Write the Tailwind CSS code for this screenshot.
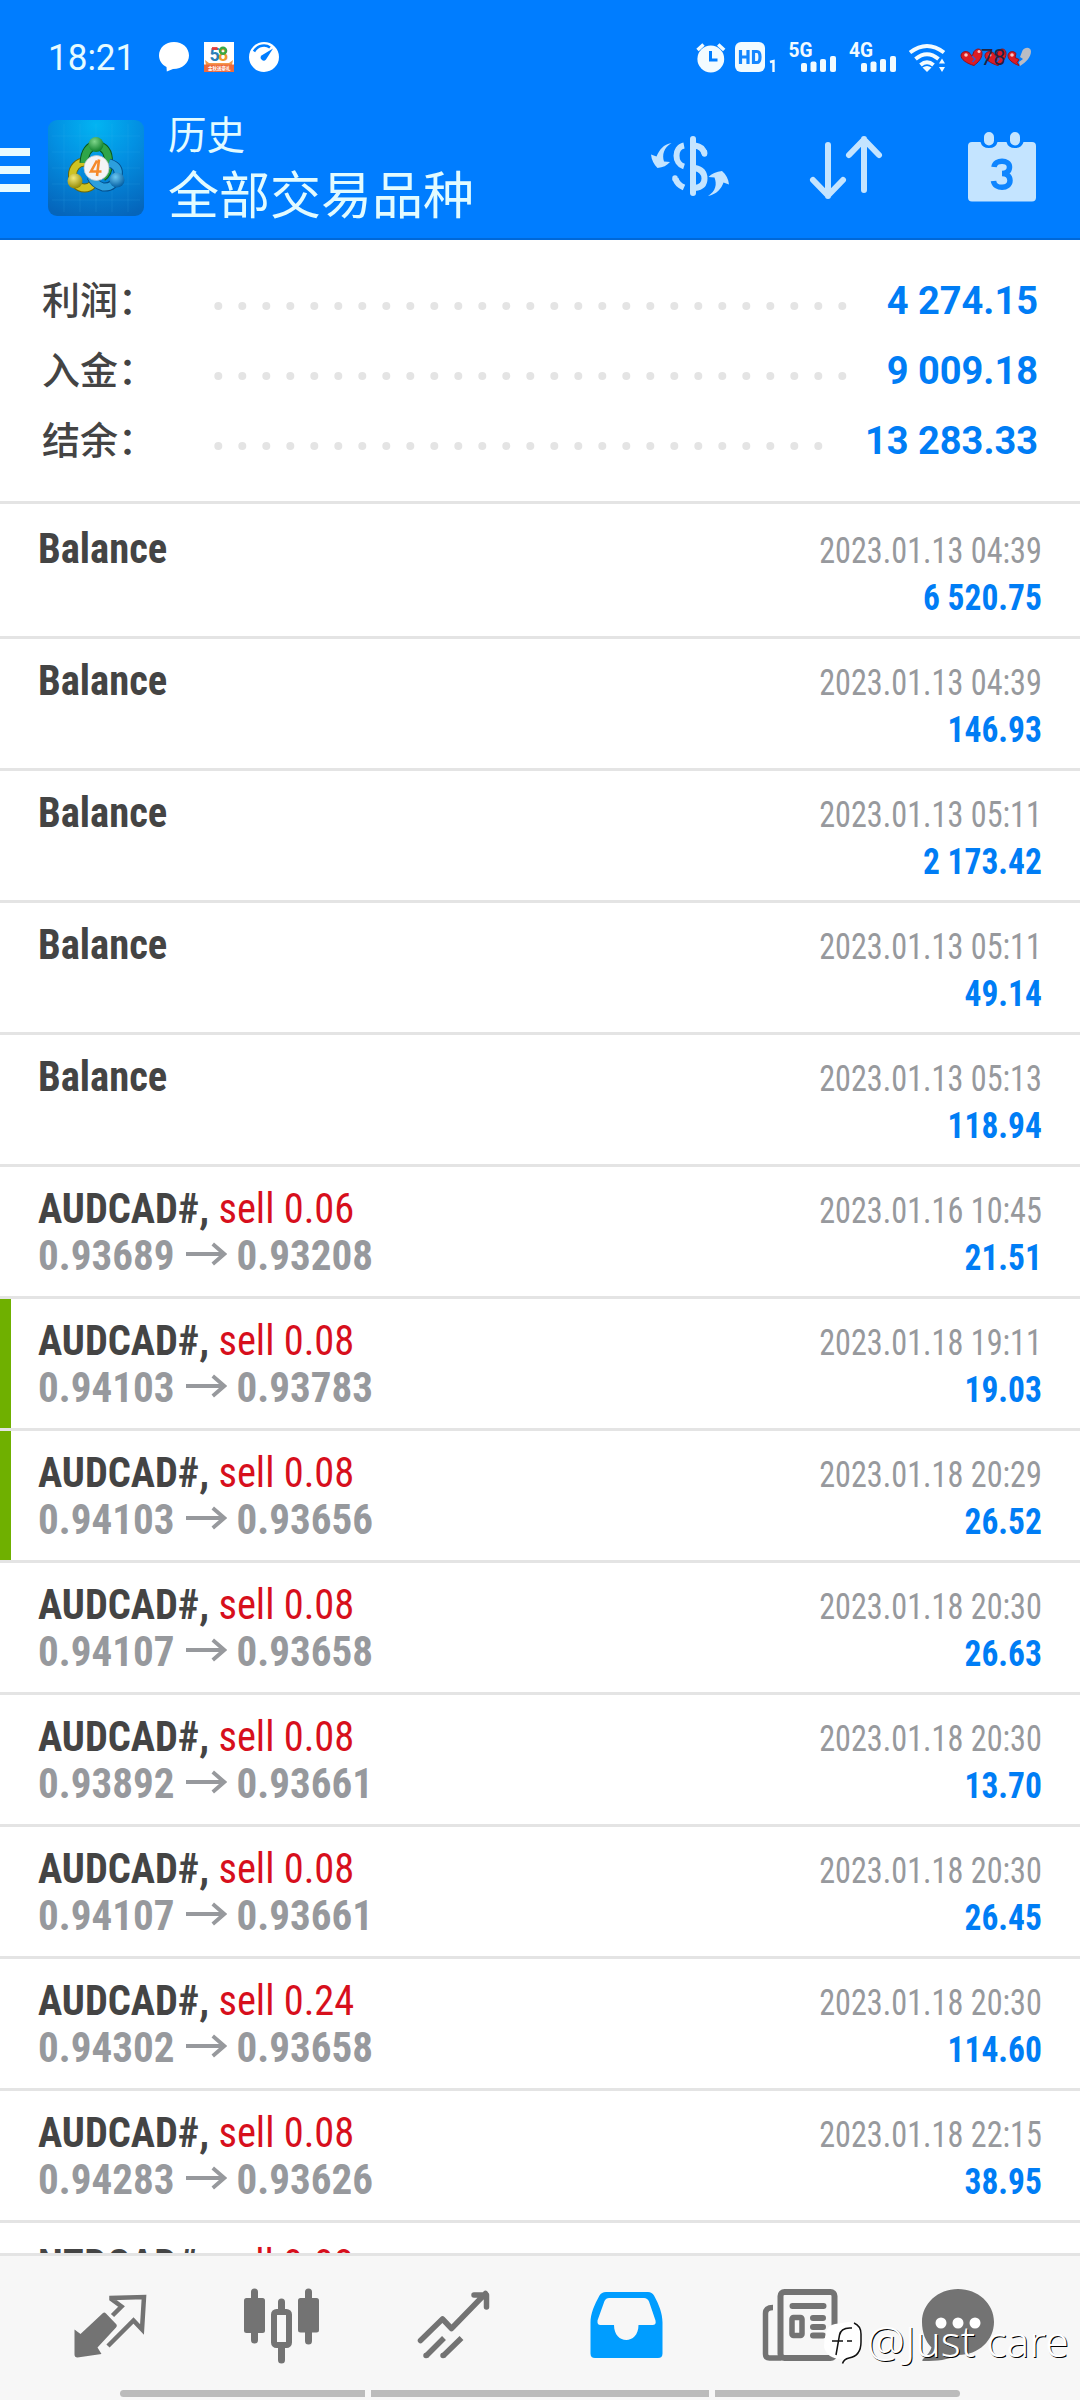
<!DOCTYPE html>
<html lang="zh-CN">
<head>
<meta charset="utf-8">
<title>历史</title>
<script src="https://cdn.jsdelivr.net/npm/@tailwindcss/browser@4"></script>
</head>
<body class="w-[1080px] h-[2400px] overflow-hidden bg-white font-['Roboto','Noto_Sans_CJK_SC',sans-serif] flex flex-col relative">

<header class="h-[240px] shrink-0 bg-[#007dff] border-b-2 border-[#0068d8] flex flex-col">
  <!-- status bar -->
  <div class="h-[116px] flex items-start justify-between pl-[48px]">
    <div class="flex items-start pt-[43px]">
      <span class="w-[111px] text-[36.5px] leading-[30px] text-[#e6fbff] origin-left scale-x-[0.96]">18:21</span>
      <svg class="-mt-px" width="30" height="30" viewBox="0 0 30 30"><path d="M15 0C6.500 0 0 5.800 0 13.500c0 5 3 9.300 7.500 11.500L7.800 29.500 14 27C23.500 27 30 21 30 13.500 30 5.800 23.500 0 15 0z" fill="#fff"/></svg>
      <svg class="-mt-px ml-[15px]" width="30" height="30" viewBox="0 0 30 30"><rect width="30" height="30" fill="#fff"/><path d="M1 18l4 3h20l4-3-1 5H2z" fill="#f59a4a"/><rect y="22.500" width="30" height="7.500" fill="#ee6a3c"/><g font-family="Roboto" font-weight="700" font-size="18"><text x="5.500" y="18.500" fill="#2a7fb8">5</text><text x="14" y="18.500" fill="#ef9a2c">8</text></g><path d="M8 6.500h5.500" stroke="#e33b3b" stroke-width="2.800"/><circle cx="19" cy="8.700" r="3" fill="none" stroke="#3aa845" stroke-width="2.400"/><text x="4" y="28" font-size="4.500" font-weight="700" fill="#fff" font-family="Noto Sans CJK SC">金秋送豪礼</text></svg>
      <svg class="-mt-px ml-[15px]" width="30" height="30" viewBox="0 0 30 30"><circle cx="15" cy="15" r="15" fill="#fff"/><path d="M5 9.500C9 2.500 17 2.500 21 5.500" fill="none" stroke="#007dff" stroke-width="2.600"/><path d="M24 6.500L12.500 13.500a3 3 0 1 0 4.500 4z" fill="#007dff"/></svg>
    </div>
    <svg width="400" height="100" viewBox="680 0 400 100" fill="#f2fbff">
      <circle cx="710.800" cy="59" r="13.400"/><path d="M697.500 50l6-5.500M724.200 50l-6-5.500" stroke="#f2fbff" stroke-width="3.500"/><path d="M710.500 51v9h7" fill="none" stroke="#007dff" stroke-width="3"/>
      <rect x="735" y="42" width="30" height="30" rx="6"/><path d="M740.500 50v14M748 50v14M740.500 57h7.500M753.500 50v14M752 51.500h5q3 0 3 5.500t-3 5.500h-5" fill="none" stroke="#1486ff" stroke-width="3.200"/>
      <path d="M770 62l3.500-1v11" fill="none" stroke="#f2fbff" stroke-width="2.400"/>
      <g font-family="Roboto" font-weight="700" font-size="20"><text x="788.500" y="57" textLength="24" lengthAdjust="spacingAndGlyphs">5G</text><text x="849" y="57" textLength="24" lengthAdjust="spacingAndGlyphs">4G</text></g>
      <g><rect x="801" y="63" width="6" height="9" rx="2"/><rect x="810.500" y="61.500" width="6" height="10.500" rx="2"/><rect x="820" y="59" width="6" height="13" rx="2"/><rect x="830" y="56" width="6" height="16" rx="2"/></g>
      <g><rect x="861" y="63" width="6" height="9" rx="2"/><rect x="870.500" y="61.500" width="6" height="10.500" rx="2"/><rect x="880" y="59" width="6" height="13" rx="2"/><rect x="890" y="56" width="6" height="16" rx="2"/></g>
      <g fill="none" stroke="#f2fbff" stroke-width="4"><path d="M910 52.500Q927 39.500 944 52.500"/><path d="M915.500 59Q927 49.500 938.500 59"/><path d="M920.500 65Q927 59.500 933.500 65"/></g><path d="M922.500 67.500q4.500-3 9 0L927 72z"/><path d="M942 58.500l3 5h-6zM942 72l3-5h-6z"/>
      <!-- heart-shaped battery gauge -->
      <g fill="#dc1c24" stroke="#8e1220" stroke-width="1"><path id="h" d="M974 65.500c-7-2-13.500-6-13-10.500 1-4 6.500-4.500 9-1.500l2 3 2-5c3-4 8-3 8 2 0 5-4 9-8 12z"/><use href="#h" x="24"/><path d="M1019 65.500c-6-2-11.500-6-11-10.500 1-4 5.500-4.500 8-1.500l-1 4 4 2-2 3z"/></g>
      <path d="M1020 66c6-3.500 11-9 11-14.500 0-4.500-6-5-8.500-1l-2.500 6.500 3 2-4 3z" fill="#b9bcc4"/>
      <path d="M972 56l3 3-2.500 3M996 56l3 3-2.500 3" fill="none" stroke="#3b56c8" stroke-width="1.500"/>
      <g fill="#fff" opacity=".75"><circle cx="966" cy="55" r="1.800"/><circle cx="979" cy="51.500" r="1.500"/><circle cx="990" cy="55" r="1.500"/><circle cx="1012" cy="55" r="1.800"/></g>
      <text x="981" y="65" font-family="Roboto" font-size="22" fill="#1f2444">78</text>
    </svg>
  </div>
  <!-- toolbar -->
  <div class="flex-1 flex items-start">
    <div class="mt-[32px] w-[30px] flex flex-col gap-[10px]"><i class="h-2 bg-[#e8fbff]"></i><i class="h-2 bg-[#e8fbff]"></i><i class="h-2 bg-[#e8fbff]"></i></div>
    <svg class="mt-1 ml-[18px]" width="96" height="96" viewBox="0 0 96 96">
      <defs>
        <radialGradient id="bg" cx=".5" cy=".05" r="1"><stop offset="0" stop-color="#02b4f2"/><stop offset=".45" stop-color="#0390e2"/><stop offset="1" stop-color="#0565bb"/></radialGradient>
        <radialGradient id="g" cx=".4" cy=".3" r=".7"><stop offset="0" stop-color="#7fd68a"/><stop offset="1" stop-color="#0d7f2b"/></radialGradient>
        <radialGradient id="y" cx=".4" cy=".3" r=".7"><stop offset="0" stop-color="#f3ea7a"/><stop offset="1" stop-color="#948a05"/></radialGradient>
        <radialGradient id="b" cx=".4" cy=".3" r=".7"><stop offset="0" stop-color="#6cc8f2"/><stop offset="1" stop-color="#045fa3"/></radialGradient>
      </defs>
      <rect width="96" height="96" rx="9" fill="url(#bg)"/>
      <path d="M16 4v88M32 4v88M48 4v88M64 4v88M80 4v88M4 16h88M4 32h88M4 48h88M4 64h88M4 80h88" stroke="#4cc0f5" stroke-opacity=".14"/>
      <ellipse cx="36.500" cy="55" rx="12" ry="13" fill="none" stroke="#6d6605" stroke-width="9"/><ellipse cx="36.500" cy="55" rx="12" ry="13" fill="none" stroke="#cfc321" stroke-width="7"/>
      <path d="M36 43q1-16 12-18 13 2 12.500 18 0 10-6 14" fill="none" stroke="#08591d" stroke-width="9"/><path d="M36 43q1-16 12-18 13 2 12.500 18 0 10-6 14" fill="none" stroke="#2fa548" stroke-width="7"/>
      <path d="M61 43q11 3 9 13-4 12-15 11-9-3-12-10" fill="none" stroke="#044f8c" stroke-width="9"/><path d="M61 43q11 3 9 13-4 12-15 11-9-3-12-10" fill="none" stroke="#2c9fdd" stroke-width="7"/>
      <circle cx="48" cy="24.500" r="7.500" fill="url(#g)"/><circle cx="27" cy="61" r="7.500" fill="url(#y)"/><circle cx="69" cy="60" r="7.500" fill="url(#b)"/>
      <circle cx="48.500" cy="48" r="12.500" fill="#f4f4f6" stroke="#b9c6cc" stroke-width=".8"/>
      <path d="M49 40.500l-6 11h10.500M51 39.500L49 56" fill="none" stroke="#f58a2c" stroke-width="2.600"/>
    </svg>
    <div class="ml-[24px] flex flex-col text-[#e2fbff]">
      <span class="text-[38.500px] leading-[44px] -mt-0.5">历史</span>
      <span class="text-[51px] leading-[60px] mt-[9px]">全部交易品种</span>
    </div>
    <div class="flex-1"></div>
    <svg width="460" height="110" viewBox="620 116 460 110" fill="none" stroke="#c4e4ff">
      <g fill="#c4e4ff" stroke="none"><path d="M671.500 143c-8 5-9.500 12-7.500 18.500l6 .5c-3 3.500-7 5.500-12.500 6-3.500-3.500-6-8-6.500-13.500l5.500 2c3-7 7-12 15-13.500z"/><path d="M708 196c8-5 9-12 6.500-18.500l-6-.5c3-3.500 8-5.500 13.500-6 4 3.500 6.500 8 7 13.500l-5.500-2c-2 6-7 12-15.500 13.500z"/></g>
      <path d="M693 139v54" stroke-width="6" stroke-linecap="round"/>
      <path d="M684 145.500c-10 2-10 18 0 21M695 145.500q8 1 9.500 8.500M695 168q9.500 2 9.500 10.500t-9.500 9.500M684 187.500q-7-3-8.500-9" stroke-width="6"/>
      <path d="M704.500 152v2M675 178v1" stroke-width="5.500" stroke-linecap="round"/>
      <path d="M828 145v51M813 180l15 15.500 15-15.500M864 190v-51M849 155l15-15.500 15 15.500" stroke-width="6" stroke-linecap="round" stroke-linejoin="round"/>
      <path d="M972 142h8.500q1.500 6 8.500 6t8.500-6h9q1.500 6 8.500 6t8.500-6h8.500q4 0 4 4v51.500q0 4-4 4h-60q-4 0-4-4V146q0-4 4-4z" fill="#c4e4ff" stroke="none"/>
      <path d="M989 137v3.500M1015 137v3.500" stroke-width="10" stroke-linecap="round"/>
      <path d="M994 167c1-8 15.500-7.500 15.500 0 0 5-4 6.500-7.500 6.500 4 0 8 2 8 7 0 9-15.500 9-16.500.5" stroke="#0f85ff" stroke-width="5.500"/>
    </svg>
  </div>
</header>

<!-- totals -->
<section class="h-[264px] shrink-0 pt-[26px] pl-[42px] pr-[42px] border-b-[3px] border-[#e4e4e4] flex flex-col" id="totals"></section>

<!-- deals -->
<main class="h-[1749px] shrink-0 overflow-hidden pt-[3px]" id="deals"></main>

<nav class="h-[147px] shrink-0 bg-[#f7f7f7] border-t-[3px] border-[#e4e4e4] flex flex-col justify-between text-[#737373]">
  <div class="flex pl-[24px]">
    <svg width="172" height="120" viewBox="24 2256 172 120" fill="none" stroke="currentColor"><path d="M74.500 2329.500l6 4.500 22.500-21q1.500-1 3 .5l10.500 11q1 1.500-.5 3L97.500 2347.500l4 6.500-24 3.500q-3 0-3-3z" fill="currentColor" stroke="none"/><path d="M112.500 2315.500l9-9-10-7.500v-1L144 2297l-2 32.500-8.500-9L108 2346" stroke-width="4.500"/></svg>
    <svg width="172" height="120" viewBox="196 2256 172 120" fill="none" stroke="currentColor"><path d="M254.500 2292v48M308.500 2292v49M281.500 2302v9M281.500 2347v13" stroke-width="7" stroke-linecap="round"/><g fill="currentColor" stroke="none"><rect x="244" y="2298" width="21" height="35" rx="2.500"/><rect x="298" y="2298" width="21" height="34.500" rx="2.500"/></g><rect x="274" y="2312" width="15" height="33" rx="2.500" stroke-width="6"/></svg>
    <svg width="172" height="120" viewBox="368 2256 172 120" fill="none" stroke="currentColor" stroke-width="5.500"><path d="M420.500 2340.500l22-21.500 9 9.500 34-35M474 2295h12.500v12" stroke-linecap="round" stroke-linejoin="round"/><path d="M444 2338l-18 18M461.500 2338l-18.500 18"/><path d="M426 2355.500l.1 0M443 2355.500l.1 0" stroke-linecap="round"/></svg>
    <svg width="172" height="120" viewBox="540 2256 172 120"><path fill-rule="evenodd" fill="#009dff" d="M606 2292h42q4 0 6 3.500c5 9 8.500 18 8.500 27v31q0 4.500-4.500 4.500h-63q-4.500 0-4.500-4.500v-31c0-9 4-18 9-27q2-3.500 6.500-3.500zM609 2298q-3 0-4.500 3l-7 19.500q-.5 4.500 3 4.500H614c0 20 24.500 20 24.500 0h14q4 0 3-4.500l-6.500-19q-1.500-3.500-5-3.500z"/></svg>
    <svg width="172" height="120" viewBox="712 2256 172 120" fill="none" stroke="currentColor"><rect x="780.500" y="2292" width="54" height="66" rx="4" stroke-width="6"/><path d="M773 2307.500q-7.500 0-7.500 6V2354q0 4 4 4h12" stroke-width="5.500"/><path d="M792.500 2306h31M813 2318h10M813 2327h10M813 2335.500h10" stroke-width="6" stroke-linecap="round"/><rect x="792" y="2317.500" width="10" height="18" rx="1.500" stroke-width="5.500"/></svg>
    <svg width="184" height="120" viewBox="884 2256 184 120" fill="currentColor"><path d="M958 2289c20 0 36 14.500 36 33 0 18-15 33-36 33-10 5-21 6-34 6q-3 0-1-2 7-6 8.500-11.500c-6-6-9.500-15-9.500-25.500 0-18.500 16-33 36-33z"/><g fill="#fff"><circle cx="941" cy="2323" r="5.500"/><circle cx="958" cy="2323" r="5.500"/><circle cx="975" cy="2323" r="5.500"/></g></svg>
  </div>
  <div class="flex gap-[6px] pl-[120px] pb-[3px]">
    <i class="h-[7px] w-[245px] bg-[#bbb] rounded-l-full"></i><i class="h-[7px] w-[338px] bg-[#bbb]"></i><i class="h-[7px] w-[245px] bg-[#bbb] rounded-r-full"></i>
  </div>
</nav>

<!-- author tag over the navigation bar -->
<div class="absolute left-[823px] top-[2318px] flex items-start">
  <svg class="mt-0.5" width="44" height="48" viewBox="824 2320 44 48"><path d="M836 2324l14-2q12 2 12 14v10q0 10-8 12-6 1-8 6l-3-5q-15 0-18-12 0-7 2-15 2-7 9-8z" fill="#fff"/><path d="M853 2328q-11-1-12.500 7l-3.500 20M833 2341h11M848 2341h5M855 2323q7 3 7 11v8q0 14-12 16-5 1-6.500 5.500" fill="none" stroke="#111" stroke-width="1.500"/></svg>
  <span class="text-[42.500px] leading-[46px] text-white font-['Noto_Sans'] font-light [text-shadow:1px_1px_0.5px_#000]">@Just care</span>
</div>

<script>
const totals = [['利润', '4 274.15', 26], ['入金', '9 009.18', 26], ['结余', '13 283.33', 25]];
document.getElementById('totals').innerHTML = totals.map(([k, v, n]) => `
  <div class="h-[70px] flex items-center">
    <span class="w-[172px] text-[38px] leading-[70px] font-medium text-[#444]">${k}：</span>
    <svg class="mt-[10px]" width="640" height="10" fill="none"><path d="M4.300 5H${4.8 + 24 * n}" stroke="#e4e4e4" stroke-width="8" stroke-linecap="round" stroke-dasharray="0 24"/></svg>
    <span class="flex-1 text-right text-[38px] leading-[70px] font-bold text-[#007df5] whitespace-nowrap">${v}</span>
  </div>`).join('');

const deals = [
  ['04:39', '6 520.75'], ['04:39', '146.93'], ['05:11', '2 173.42'], ['05:11', '49.14'], ['05:13', '118.94'],
].map(([t, v]) => ({ time: '2023.01.13 ' + t, value: v })).concat([
  ['16 10:45', '21.51', '0.06', '0.93689', '0.93208'],
  ['18 19:11', '19.03', '0.08', '0.94103', '0.93783', 1],
  ['18 20:29', '26.52', '0.08', '0.94103', '0.93656', 1],
  ['18 20:30', '26.63', '0.08', '0.94107', '0.93658'],
  ['18 20:30', '13.70', '0.08', '0.93892', '0.93661'],
  ['18 20:30', '26.45', '0.08', '0.94107', '0.93661'],
  ['18 20:30', '114.60', '0.24', '0.94302', '0.93658'],
  ['18 22:15', '38.95', '0.08', '0.94283', '0.93626'],
].map(([t, v, lot, a, b, mark]) => ({ time: '2023.01.' + t, value: v, sym: 'AUDCAD#', lot, a, b, mark })));
deals.push({ time: '', value: '', sym: 'NZDCAD#', lot: '0.08' });

document.getElementById('deals').innerHTML = deals.map(d => `
  <div class="h-[132px] border-b-[3px] border-[#e4e4e4] flex font-['Roboto_Condensed'] whitespace-nowrap">
    <i class="w-[11px] ${d.mark ? 'bg-[#6fb000]' : ''}"></i>
    <div class="flex-1 pl-[27px] pr-[38px] flex justify-between">
      <div class="pt-[18px] text-[43px] leading-[47px]">
        ${d.sym ? `<p class="origin-left scale-x-[0.941]"><b class="text-[#444]">${d.sym},</b> <span class="text-[#d70f1c]">sell ${d.lot}</span></p>
        ${d.a ? `<p class="flex items-center font-bold text-[#97999d] origin-left scale-x-[0.955]"><span>${d.a}</span><svg class="ml-[12px] mr-[10px] -mt-1" width="43" height="24" viewBox="0 0 43 24" fill="none" stroke="currentColor" stroke-width="4"><path d="M0 12h40M28 2l12 10L28 22"/></svg><span>${d.b}</span></p>` : ''}`
        : `<p class="origin-left scale-x-[0.943] font-bold text-[#444]">Balance</p>`}
      </div>
      <div class="pt-[21px] text-right text-[36px] leading-[47px]">
        <p class="text-[#97999d] origin-right scale-x-[0.895]">${d.time}</p>
        <p class="font-bold text-[#007df5] origin-right scale-x-[0.93]">${d.value}</p>
      </div>
    </div>
  </div>`).join('');
</script>
</body>
</html>
